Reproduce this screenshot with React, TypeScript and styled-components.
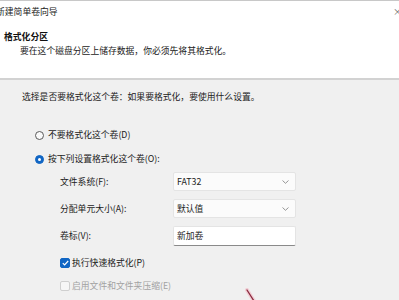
import React from 'react';
import styled, { createGlobalStyle } from 'styled-components';

const Global = createGlobalStyle`
  html, body { margin: 0; padding: 0; background: #f0f0f0; overflow: hidden; }
  body { font-family: "Noto Sans CJK SC", "Noto Sans", sans-serif; }
`;

const Window = styled.div`
  width: 399px;
  height: 300px;
  position: relative;
  overflow: hidden;
  display: flex;
  flex-direction: column;
  background: #f0f0f0;
  color: #1b1b1b;
  font-size: 8.8px;
  line-height: 12px;
`;

const Header = styled.header`
  height: 80px;
  box-sizing: border-box;
  background: #fff;
  border-top: 1px solid #c8c8c8;
  border-bottom: 2px solid #d2d2d2;
  display: flex;
  flex-direction: column;
  flex-shrink: 0;
`;

const TitleRow = styled.div`
  margin-top: 5px;
  height: 12px;
  display: flex;
  justify-content: space-between;
  align-items: center;
`;

const Title = styled.span`
  margin-left: -4px;
  color: #222;
`;

const Close = styled.span`
  margin-right: -3px;
  font-size: 9px;
  color: #666;
`;

const Heading = styled.div`
  margin-top: 13px;
  margin-left: 4px;
  font-weight: 700;
  color: #111;
`;

const Desc = styled.div`
  margin-top: 2px;
  margin-left: 20px;
  color: #222;
`;

const Body = styled.main`
  padding: 11px 0 0 22px;
  display: flex;
  flex-direction: column;
`;

const Intro = styled.div`
  height: 12px;
`;

const Options = styled.div`
  margin-top: 24px;
  margin-left: 13px;
  display: flex;
  flex-direction: column;
  gap: 8px;
`;

const RadioRow = styled.label`
  height: 16px;
  display: flex;
  align-items: center;
  gap: 4px;
`;

const RadioDot = styled.span<{ $on?: boolean }>`
  width: 9px;
  height: 9px;
  box-sizing: border-box;
  border-radius: 50%;
  flex-shrink: 0;
  display: flex;
  align-items: center;
  justify-content: center;
  background: ${p => (p.$on ? '#1166c4' : '#fafafa')};
  border: 1px solid ${p => (p.$on ? '#1166c4' : '#5a5a5a')};
  &::after {
    content: '';
    display: ${p => (p.$on ? 'block' : 'none')};
    width: 3px;
    height: 3px;
    border-radius: 50%;
    background: #fff;
  }
`;

const Form = styled.div`
  margin-top: 5px;
  margin-left: 38px;
  display: grid;
  grid-template-columns: 113px 123px;
  grid-template-rows: 19px 19px 20px;
  row-gap: 8px;
  align-items: center;
`;

const Label = styled.span``;

const Select = styled.div`
  height: 100%;
  box-sizing: border-box;
  background: #fbfbfb;
  border: 1px solid #e4e4e4;
  border-radius: 2px;
  padding: 0 6px 0 3px;
  display: flex;
  align-items: center;
  justify-content: space-between;
`;

const TextBox = styled.div`
  height: 100%;
  box-sizing: border-box;
  background: #fff;
  border: 1px solid #e4e4e4;
  border-bottom: 1px solid #8a8a8a;
  border-radius: 2px;
  padding: 0 3px;
  display: flex;
  align-items: center;
`;

const CheckRow = styled.label<{ $disabled?: boolean; $gap: number }>`
  margin-top: ${p => p.$gap}px;
  margin-left: 38px;
  height: 14px;
  display: flex;
  align-items: center;
  gap: 2px;
  color: ${p => (p.$disabled ? '#a2a2a2' : '#1b1b1b')};
`;

const Box = styled.span<{ $on?: boolean }>`
  width: 10px;
  height: 10px;
  box-sizing: border-box;
  border-radius: 2px;
  flex-shrink: 0;
  display: flex;
  align-items: center;
  justify-content: center;
  background: ${p => (p.$on ? '#1166c4' : '#f6f6f6')};
  border: 1px solid ${p => (p.$on ? '#1166c4' : '#cfcfcf')};
`;

const Pointer = styled.svg`
  position: absolute;
  left: 240px;
  top: 284px;
`;

const Chevron = () => (
  <svg width="7" height="4" viewBox="0 0 7 4">
    <path d="M0.5 0.5 L3.5 3.3 L6.5 0.5" fill="none" stroke="#8a8a8a" strokeWidth="0.9" />
  </svg>
);

const Check = () => (
  <svg width="7" height="6" viewBox="0 0 7 6">
    <path d="M0.8 3.2 L2.6 5 L6.2 1" fill="none" stroke="#fff" strokeWidth="1.2" />
  </svg>
);

export default function App() {
  return (
    <Window>
      <Global />
      <Header>
        <TitleRow>
          <Title>新建简单卷向导</Title>
          <Close>×</Close>
        </TitleRow>
        <Heading>格式化分区</Heading>
        <Desc>要在这个磁盘分区上储存数据，你必须先将其格式化。</Desc>
      </Header>
      <Body>
        <Intro>选择是否要格式化这个卷：如果要格式化，要使用什么设置。</Intro>
        <Options>
          <RadioRow>
            <RadioDot />
            不要格式化这个卷(D)
          </RadioRow>
          <RadioRow>
            <RadioDot $on />
            按下列设置格式化这个卷(O):
          </RadioRow>
        </Options>
        <Form>
          <Label>文件系统(F):</Label>
          <Select>
            <span>FAT32</span>
            <Chevron />
          </Select>
          <Label>分配单元大小(A):</Label>
          <Select>
            <span>默认值</span>
            <Chevron />
          </Select>
          <Label>卷标(V):</Label>
          <TextBox>新加卷</TextBox>
        </Form>
        <CheckRow $gap={10}>
          <Box $on>
            <Check />
          </Box>
          执行快速格式化(P)
        </CheckRow>
        <CheckRow $gap={9} $disabled>
          <Box />
          启用文件和文件夹压缩(E)
        </CheckRow>
      </Body>
      <Pointer width="20" height="18" viewBox="0 0 20 18">
        <path d="M7 6 L14 17" stroke="#f3b8c4" strokeWidth="4" strokeLinecap="round" opacity="0.6" />
        <path d="M7 6 L14 17" stroke="#8a2a3e" strokeWidth="1.3" strokeLinecap="round" />
      </Pointer>
    </Window>
  );
}
